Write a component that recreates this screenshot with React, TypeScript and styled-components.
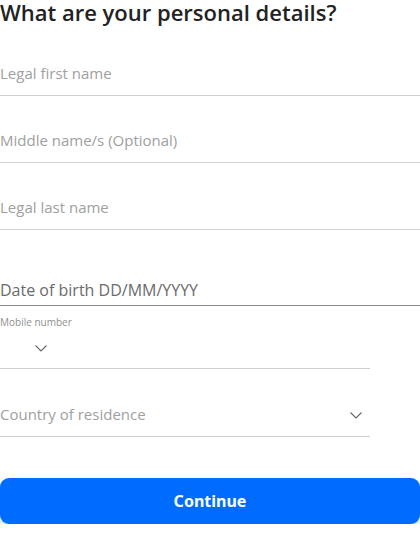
import React from "react";
import styled, { createGlobalStyle } from "styled-components";

const Global = createGlobalStyle`
  html, body { margin: 0; padding: 0; background: #fff; }
  body { font-family: "Open Sans", "Noto Sans", sans-serif; }
  * { box-sizing: border-box; }
`;

const Page = styled.div`
  width: 420px;
  display: flex;
  flex-direction: column;
`;

const Title = styled.h1`
  margin: 0;
  font-family: "Open Sans", sans-serif;
  font-weight: 600;
  font-size: 22px;
  line-height: 25px;
  color: #222;
  white-space: nowrap;
`;

const Field = styled.label<{ $h: number; $w?: number; $strong?: boolean }>`
  display: flex;
  align-items: flex-end;
  justify-content: space-between;
  height: ${(p) => p.$h}px;
  width: ${(p) => (p.$w ? `${p.$w}px` : "100%")};
  border-bottom: 1px solid ${(p) => (p.$strong ? "#8a8a8a" : "#cfcfcf")};
  padding-bottom: ${(p) => (p.$strong ? 5 : 12)}px;
`;

const Input = styled.input<{ $strong?: boolean }>`
  border: none;
  outline: none;
  padding: 0;
  background: transparent;
  width: 100%;
  font-family: "Open Sans", sans-serif;
  font-size: ${(p) => (p.$strong ? 16 : 15)}px;
  line-height: 20px;
  color: #333;
  &::placeholder {
    color: ${(p) => (p.$strong ? "#6b6b6b" : "#a0a0a0")};
  }
`;

const MobileField = styled.div`
  width: 370px;
  height: 63px;
  display: flex;
  flex-direction: column;
  border-bottom: 1px solid #cfcfcf;
  padding-top: 9px;
`;

const SmallLabel = styled.span`
  font-family: "Open Sans", sans-serif;
  font-size: 10px;
  line-height: 14px;
  color: #8f8f8f;
`;

const CodeRow = styled.div`
  display: flex;
  align-items: center;
  height: 26px;
  padding-left: 35px;
  margin-top: 6px;
`;

const Chevron = styled.svg`
  width: 12px;
  height: 7px;
  flex: none;
`;

const SelectText = styled.span`
  font-family: "Open Sans", sans-serif;
  font-size: 15px;
  line-height: 20px;
  color: #a0a0a0;
`;

const ChevronWrap = styled.span`
  display: flex;
  padding-right: 8px;
  padding-bottom: 5px;
`;

const Button = styled.button`
  margin-top: 41px;
  height: 46px;
  width: 420px;
  border: none;
  border-radius: 9px;
  background: #006cff;
  color: #fff;
  font-family: "Noto Sans", "Open Sans", sans-serif;
  font-weight: 700;
  font-size: 16px;
  box-shadow: 0 4px 8px rgba(0, 108, 255, 0.25);
`;

const Arrow = () => (
  <Chevron viewBox="0 0 12 7">
    <path d="M0.5 0.5 L6 6 L11.5 0.5" fill="none" stroke="#666" strokeWidth="1.1" />
  </Chevron>
);

export default function App() {
  return (
    <Page>
      <Global />
      <Title>What are your personal details?</Title>
      <Field $h={71}>
        <Input placeholder="Legal first name" />
      </Field>
      <Field $h={67}>
        <Input placeholder="Middle name/s (Optional)" />
      </Field>
      <Field $h={67}>
        <Input placeholder="Legal last name" />
      </Field>
      <Field $h={76} $strong>
        <Input $strong placeholder="Date of birth DD/MM/YYYY" />
      </Field>
      <MobileField>
        <SmallLabel>Mobile number</SmallLabel>
        <CodeRow>
          <Arrow />
        </CodeRow>
      </MobileField>
      <Field $h={68} $w={370}>
        <SelectText>Country of residence</SelectText>
        <ChevronWrap>
          <Arrow />
        </ChevronWrap>
      </Field>
      <Button>Continue</Button>
    </Page>
  );
}
